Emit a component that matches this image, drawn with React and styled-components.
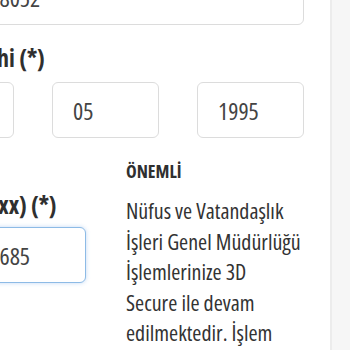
import React from "react";
import styled, { createGlobalStyle } from "styled-components";

const GlobalStyle = createGlobalStyle`
  html, body {
    margin: 0;
    padding: 0;
    background: #fff;
  }
  body {
    font-family: "Open Sans", "Noto Sans", sans-serif;
    font-stretch: 75%;
    color: #333;
  }
`;

const Page = styled.div`
  width: 350px;
  height: 350px;
  overflow: hidden;
  display: flex;
`;

const Main = styled.main`
  width: 330px;
  flex-shrink: 0;
  overflow: hidden;
  background: #fff;
`;

const Side = styled.aside`
  flex: 1;
  background: #f6f6f6;
  border-left: 2px solid #ececec;
`;

const Form = styled.form`
  width: 397px;
  margin: -31px 0 0 -93px;
  display: flex;
  flex-direction: column;
`;

const Input = styled.input`
  box-sizing: border-box;
  width: 100%;
  height: 56px;
  padding: 0 20px;
  border: 1px solid ${(p) => (p.$focus ? "#8dbbe6" : "#dcdcdc")};
  box-shadow: ${(p) => (p.$focus ? "0 0 4px rgba(120,170,230,0.45)" : "none")};
  border-radius: 6px;
  font-family: inherit;
  font-stretch: inherit;
  font-size: 24px;
  color: #444;
  background: #fff;
  outline: none;
`;

const Label = styled.label`
  display: block;
  font-weight: 700;
  font-size: 24px;
  line-height: 28px;
  color: #2f2f2f;
  white-space: nowrap;
  margin: ${(p) => p.$m || "0"};
`;

const DateRow = styled.div`
  display: grid;
  grid-template-columns: repeat(3, 1fr);
  column-gap: 38px;
`;

const Columns = styled.div`
  display: grid;
  grid-template-columns: 179px 1fr;
  column-gap: 40px;
  margin-top: 21px;
`;

const Col = styled.div`
  padding-top: ${(p) => p.$pt || 0}px;
`;

const NoteTitle = styled.h4`
  margin: 0;
  font-size: 18px;
  line-height: 24px;
  font-weight: 700;
  color: #2f2f2f;
`;

const NoteText = styled.p`
  margin: 12px 0 0;
  font-size: 22px;
  line-height: 30.5px;
  color: #333;
  white-space: nowrap;
`;

export default function App() {
  return (
    <>
      <GlobalStyle />
      <Page>
        <Main>
          <Form>
            <Input defaultValue="12345678052" />
            <Label $m="19px 0 10px -16px">Doğum Tarihi (*)</Label>
            <DateRow>
              <Input defaultValue="14" />
              <Input defaultValue="05" />
              <Input defaultValue="1995" />
            </DateRow>
            <Columns>
              <Col $pt={32}>
                <Label $m="0 0 8px -12px">Telefon (05xx) (*)</Label>
                <Input $focus defaultValue="5321234685" />
              </Col>
              <Col>
                <NoteTitle>ÖNEMLİ</NoteTitle>
                <NoteText>
                  Nüfus ve Vatandaşlık
                  <br />
                  İşleri Genel Müdürlüğü
                  <br />
                  İşlemlerinize 3D
                  <br />
                  Secure ile devam
                  <br />
                  edilmektedir. İşlem
                  <br />
                  sonucunu bekleyiniz.
                </NoteText>
              </Col>
            </Columns>
          </Form>
        </Main>
        <Side />
      </Page>
    </>
  );
}
